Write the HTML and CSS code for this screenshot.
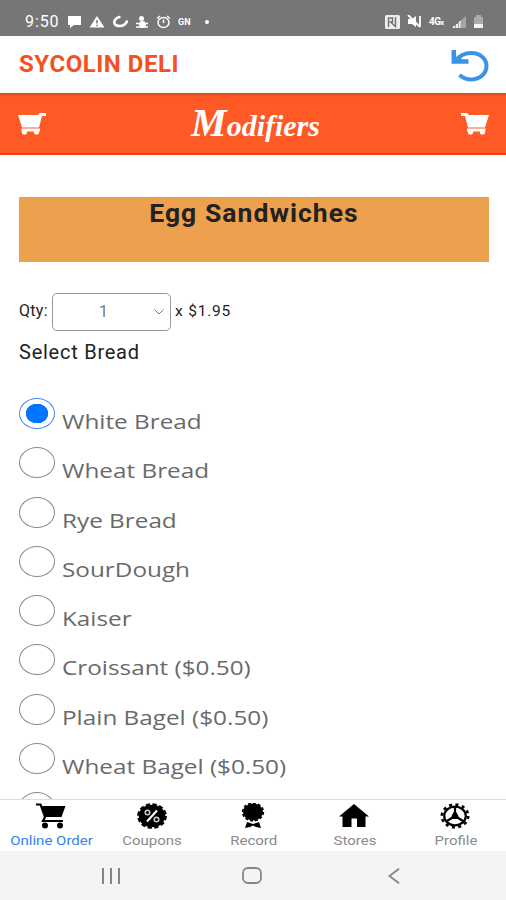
FILE: index.html
```html
<!DOCTYPE html>
<html lang="en">
<head>
    <meta charset="UTF-8">
    <meta name="viewport" content="width=device-width, initial-scale=1.0">
    <title>Sycolin Deli - Modifiers</title>
    <link rel="stylesheet" href="styles.css">
</head>
<body>
    <div class="status-bar">
        <div class="status-left">
            <span class="time">9:50</span>
            <svg width="15" height="13" viewBox="0 0 15 13"><path fill="#fff" d="M1 1h13v9H7l-4 3v-3H1z"/></svg>
            <svg width="16" height="13" viewBox="0 0 16 13"><path fill="#fff" d="M8 1l7.500 11.500H.5z"/><path stroke="#767676" stroke-width="1.500" d="M8 5v3.500M8 9.800v1.500"/></svg>
            <svg width="16" height="13" viewBox="0 0 16 13"><path fill="none" stroke="#fff" stroke-width="2.600" d="M8.500 1.800C4 2.500 1.500 5.500 2.500 8.500s7 3 9.500 1.300 3-3 3.500-4.300"/></svg>
            <svg width="14" height="14" viewBox="0 0 14 14"><circle cx="6.500" cy="3.500" r="2.500" fill="#fff"/><ellipse cx="7.500" cy="9.500" rx="3.500" ry="3.500" fill="#fff"/><path fill="none" stroke="#fff" stroke-width="1.500" d="M1 8.500h12M1 12h12"/></svg>
            <svg width="15" height="14" viewBox="0 0 15 14"><ellipse cx="7.500" cy="7.500" rx="5.500" ry="5" fill="none" stroke="#fff" stroke-width="1.500"/><path fill="none" stroke="#fff" stroke-width="1.500" d="M7.500 4.500V8M1 3.500L4 1M14 3.500L11 1"/></svg>
            <span class="carrier">GN</span>
            <span class="dot"></span>
        </div>
        <div class="status-right">
            <svg width="15" height="14" viewBox="0 0 15 14"><rect width="15" height="14" rx="1.500" fill="#eee"/><path fill="none" stroke="#767676" stroke-width="1.500" d="M3.500 12V3h4v4h-2l5 4.500V2"/></svg>
            <svg width="15" height="13" viewBox="0 0 15 13"><path fill="#fff" d="M1 4h4l4-3v11L5 9H1z"/><path stroke="#fff" stroke-width="1.800" d="M1 0l12 12M13 1v11"/></svg>
            <span class="network">4G<small>x</small></span>
            <svg width="14" height="12" viewBox="0 0 14 12"><path fill="#a5a5a5" d="M14 0v12H0z"/><path fill="#eee" d="M1 10h2v2H1zM4 8h2v4H4zM7 5h1.500v7H7z"/></svg>
            <svg width="11" height="14" viewBox="0 0 11 14"><path fill="#aaa" d="M3 0h5v2h2v7H1V2h2z"/><path fill="#f4f4f4" d="M1 9h9v4H1z"/></svg>
        </div>
    </div>

    <header class="header">
        <h1>SYCOLIN DELI</h1>
        <svg class="undo" width="38" height="34" viewBox="0 0 38 34">
            <path fill="none" stroke="#3b93e8" stroke-width="4" d="M4 12C9 6 14 4 20 4c9 0 15.500 5.500 15.500 13S29 30.500 20 30.500c-4.500 0-8-1.500-11.500-4.500"/>
            <path fill="none" stroke="#3b93e8" stroke-width="4.500" d="M2.800 1v11.500H17.500"/>
            <path fill="#3b93e8" d="M1 14.500V8l4 2 4-4 2 5z"/>
        </svg>
    </header>

    <div class="title-bar">
        <svg width="28" height="22" viewBox="0 0 28 22">
            <path fill="#fff" d="M0 2h20l2-2h6v3h-4l-3 11.500H4z"/>
            <path stroke="#fff" stroke-width="3" d="M3.500 17h18.500"/>
            <circle cx="6.500" cy="19" r="2.600" fill="#fff"/><circle cx="18.500" cy="19" r="2.600" fill="#fff"/>
        </svg>
        <h2>Modifiers</h2>
        <svg width="28" height="22" viewBox="0 0 28 22">
            <path fill="#fff" d="M28 2H8L6 0H0v3h4l3 11.500h17z"/>
            <path stroke="#fff" stroke-width="3" d="M6 17h18.500"/>
            <circle cx="9.500" cy="19" r="2.600" fill="#fff"/><circle cx="21.500" cy="19" r="2.600" fill="#fff"/>
        </svg>
    </div>

    <main class="content">
        <h3 class="item-name">Egg Sandwiches</h3>

        <div class="qty-row">
            <span class="qty-label">Qty:</span>
            <div class="qty-select">
                <span>1</span>
                <svg width="10" height="6" viewBox="0 0 10 6"><path fill="none" stroke="#777" d="M.5.500L5 5 9.500.500"/></svg>
            </div>
            <span class="price">x $1.95</span>
        </div>

        <p class="group-title">Select Bread</p>

        <div class="options">
            <div class="option"><span class="radio checked"></span><span class="label">White Bread</span></div>
            <div class="option"><span class="radio"></span><span class="label">Wheat Bread</span></div>
            <div class="option"><span class="radio"></span><span class="label">Rye Bread</span></div>
            <div class="option"><span class="radio"></span><span class="label">SourDough</span></div>
            <div class="option"><span class="radio"></span><span class="label">Kaiser</span></div>
            <div class="option"><span class="radio"></span><span class="label">Croissant ($0.50)</span></div>
            <div class="option"><span class="radio"></span><span class="label">Plain Bagel ($0.50)</span></div>
            <div class="option"><span class="radio"></span><span class="label">Wheat Bagel ($0.50)</span></div>
            <div class="option"><span class="radio"></span></div>
        </div>
    </main>

    <nav class="tabs">
        <div class="tab active">
            <svg width="30" height="26" viewBox="0 0 30 26">
                <path d="M5 3h24.500l-4 11H9z"/>
                <path fill="none" stroke="#000" stroke-width="2.200" d="M0 1.500h4.500L9 14l-2 4h20"/>
                <circle cx="9" cy="22.500" r="3"/><circle cx="24" cy="22.500" r="3"/>
            </svg>
            <span>Online Order</span>
        </div>
        <div class="tab">
            <svg width="30" height="26" viewBox="0 0 30 26">
                <ellipse cx="15" cy="13" rx="13.300" ry="11.200"/>
                <ellipse cx="15" cy="13" rx="13.800" ry="11.700" fill="none" stroke="#000" stroke-width="2.200" stroke-dasharray="4.200 2.500"/>
                <path stroke="#fff" stroke-width="2" d="M20 7.500L10 18.500"/>
                <circle cx="10.500" cy="9.500" r="2.300" fill="none" stroke="#ccc" stroke-width="1.500"/><circle cx="19.500" cy="16.500" r="2.300" fill="none" stroke="#ccc" stroke-width="1.500"/>
            </svg>
            <span>Coupons</span>
        </div>
        <div class="tab">
            <svg width="30" height="26" viewBox="0 0 30 26">
                <ellipse cx="15" cy="9" rx="10" ry="8.500"/>
                <ellipse cx="15" cy="9" rx="10.400" ry="8.800" fill="none" stroke="#000" stroke-width="1.600" stroke-dasharray="3 2"/>
                <path d="M9 19l6 2 6-2 2 6-5-1-3-1.500-3 1.500-5 1z"/>
            </svg>
            <span>Record</span>
        </div>
        <div class="tab">
            <svg width="30" height="26" viewBox="0 0 30 26">
                <path d="M15 1l15 12.500h-3.500V24H18v-8.500h-5.500V24H3.500V13.500H0z"/>
            </svg>
            <span>Stores</span>
        </div>
        <div class="tab">
            <svg width="30" height="26" viewBox="0 0 30 26">
                <ellipse cx="15" cy="13" rx="10.800" ry="9.300" fill="none" stroke="#000" stroke-width="2.200"/>
                <ellipse cx="15" cy="13" rx="13.200" ry="11.400" fill="none" stroke="#000" stroke-width="2.600" stroke-dasharray="3 3.460"/>
                <path stroke="#000" stroke-width="2.200" d="M15 4v9M15 13l-8 5M15 13l8 5"/>
                <path d="M15 7l3 5 1 4h-8l1-4z"/>
            </svg>
            <span>Profile</span>
        </div>
    </nav>

    <div class="system-nav">
        <svg width="20" height="16" viewBox="0 0 20 16"><path stroke="#858585" stroke-width="2" d="M2 0v16M10 0v16M18 0v16"/></svg>
        <svg class="home" width="20" height="17" viewBox="0 0 20 17"><rect x="1" y="1" width="18" height="15" rx="5" fill="none" stroke="#858585" stroke-width="1.800"/></svg>
        <svg width="12" height="16" viewBox="0 0 12 16"><path fill="none" stroke="#858585" stroke-width="1.800" d="M11 .800L1.500 8l9.500 7.200"/></svg>
    </div>
</body>
</html>
```
FILE: styles.css
```css
* {
    box-sizing: border-box;
}

body {
    display: flex;
    flex-direction: column;
    height: 900px;
    margin: 0;
    overflow: hidden;
    background-color: #fff;
    font-family: Roboto, sans-serif;
    color: #222;
}

h1, h2, h3, p {
    margin: 0;
}

svg {
    display: block;
    flex-shrink: 0;
}

.status-bar {
    display: flex;
    justify-content: space-between;
    height: 36px;
    padding: 7px 22px 0 25px;
    background-color: #767676;
    color: #fff;
}

.status-left, .status-right {
    display: flex;
    align-items: center;
    height: 29px;
}

.status-left {
    gap: 7px;
}

.status-right {
    gap: 7px;
}

.time {
    width: 35px;
    font-size: 16px;
    letter-spacing: 0.9px;
}

.carrier {
    width: 16px;
    font-size: 9px;
    font-weight: bold;
}

.dot {
    width: 4px;
    height: 4px;
    margin-left: 4px;
    border-radius: 50%;
    background-color: #fff;
}

.network {
    width: 16px;
    font-size: 10px;
    font-weight: bold;
    letter-spacing: -0.5px;
}

.network small {
    font-size: 7px;
}

.header {
    display: flex;
    justify-content: space-between;
    align-items: center;
    height: 57px;
    padding: 0 17px 0 19px;
}

.header h1 {
    margin-bottom: 2px;
    font-size: 24px;
    line-height: 28px;
    letter-spacing: 0.55px;
    font-weight: bold;
    color: #f5501e;
}

.undo {
    margin-top: 3px;
}

.title-bar {
    display: flex;
    justify-content: space-between;
    align-items: center;
    height: 62px;
    padding: 2px 17px 0 18px;
    background: linear-gradient(#cf4a20, #ff5a26 4px);
    border-bottom: 2px solid #e8401a;
}

.title-bar h2 {
    padding-left: 4px;
    font-family: "Liberation Serif", cursive;
    font-size: 30px;
    line-height: 40px;
    font-style: italic;
    font-weight: bold;
    color: #fff;
}

.title-bar h2::first-letter {
    font-size: 40px;
}

.content {
    flex: 1;
    min-height: 0;
    padding: 42px 17px 0 19px;
    overflow: hidden;
}

.item-name {
    height: 65px;
    background-color: #eda14f;
    font-size: 26.5px;
    line-height: 31px;
    letter-spacing: 1.05px;
    text-align: center;
}

.qty-row {
    display: flex;
    align-items: center;
    height: 38px;
    margin-top: 31px;
    font-size: 16px;
    line-height: 20px;
}

.qty-label, .price {
    margin-bottom: 2px;
}

.qty-label {
    width: 33px;
    letter-spacing: 0.3px;
}

.qty-select {
    display: flex;
    justify-content: space-between;
    align-items: center;
    width: 119px;
    height: 38px;
    padding: 0 6px 0 46px;
    border: 1px solid #999;
    border-radius: 5px;
    color: #777;
}

.price {
    margin-left: 4px;
    font-size: 15.5px;
    letter-spacing: 0.8px;
}

.group-title {
    margin-top: 8px;
    font-size: 20px;
    line-height: 26px;
    letter-spacing: 0.75px;
}

.options {
    margin-top: 33px;
}

.option {
    display: flex;
    height: 49.3px;
}

.radio {
    width: 36px;
    height: 31px;
    border: 1px solid #888;
    border-radius: 50%;
}

.radio.checked {
    border-color: #3d86f5;
    background: radial-gradient(ellipse 11.5px 10px, #0075ff 95%, #fff 100%);
}

.label {
    margin: 9px 0 0 7px;
    font-family: "Open Sans", sans-serif;
    font-size: 20.5px;
    line-height: 28px;
    white-space: nowrap;
    color: #6a6a6a;
    transform: scaleX(1.185);
    transform-origin: left;
}

.tabs {
    display: flex;
    height: 52px;
    border-top: 1px solid #ddd;
}

.tab {
    flex: 1;
    display: flex;
    flex-direction: column;
    align-items: center;
    padding-top: 3px;
    font-size: 12.5px;
    line-height: 18px;
    white-space: nowrap;
    color: #8a8a8a;
}

.tab span {
    margin-top: 3px;
    padding-left: 1px;
    transform: scaleX(1.2);
}

.tab.active {
    color: #3880f0;
}

.system-nav {
    display: flex;
    justify-content: space-between;
    align-items: center;
    height: 49px;
    padding: 0 106px 0 101px;
    background-color: #f4f4f4;
}

.home {
    margin-right: 5px;
}
```
